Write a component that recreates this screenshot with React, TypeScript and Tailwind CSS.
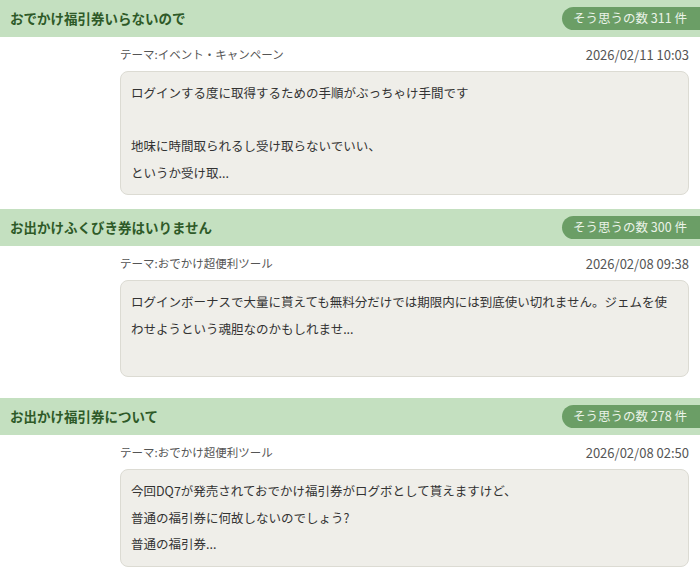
import React from 'react';

interface Post {
  title: string;
  count: number;
  theme: string;
  date: string;
  lines: string[];
  gap: string;
}

const posts: Post[] = [
  {
    title: 'おでかけ福引券いらないので',
    count: 311,
    theme: 'イベント・キャンペーン',
    date: '2026/02/11 10:03',
    lines: [
      'ログインする度に取得するための手順がぶっちゃけ手間です',
      '',
      '地味に時間取られるし受け取らないでいい、',
      'というか受け取...',
    ],
    gap: 'mb-[14px]',
  },
  {
    title: 'お出かけふくびき券はいりません',
    count: 300,
    theme: 'おでかけ超便利ツール',
    date: '2026/02/08 09:38',
    lines: [
      'ログインボーナスで大量に貰えても無料分だけでは期限内には到底使い切れません。ジェムを使',
      'わせようという魂胆なのかもしれませ...',
    ],
    gap: 'mb-[21px]',
  },
  {
    title: 'お出かけ福引券について',
    count: 278,
    theme: 'おでかけ超便利ツール',
    date: '2026/02/08 02:50',
    lines: [
      '今回DQ7が発売されておでかけ福引券がログボとして貰えますけど、',
      '普通の福引券に何故しないのでしょう?',
      '普通の福引券...',
    ],
    gap: 'mb-[16px]',
  },
];

const PostItem: React.FC<{ post: Post }> = ({ post }) => (
  <div className={post.gap}>
    {/* title bar */}
    <div className="h-[37px] bg-[#c4e0c0] flex items-center justify-between pl-[10px]">
      <h2 className="text-[13.5px] font-bold text-[#2e5a28] whitespace-nowrap">{post.title}</h2>
      <div className="h-[23px] w-[138px] bg-[#6b9e66] rounded-l-full flex items-center justify-center pr-[2px] text-[12.5px] text-[#eaf3e8] whitespace-nowrap">
        そう思うの数 {post.count} 件
      </div>
    </div>

    <div className="ml-[120px] mr-[11px]">
      <div className="h-[34px] flex items-center justify-between pt-[2px] text-[13px] text-[#555]">
        <span className="text-[11.5px]">テーマ:{post.theme}</span>
        <span>{post.date}</span>
      </div>
      <div className="min-h-[97px] bg-[#efeee9] border border-[#dcdbd3] rounded-lg px-[10px] py-[8px] text-[12.5px] leading-[26.5px] text-[#333]">
        {post.lines.map((line, i) => (
          <div key={i} className="whitespace-nowrap h-[26.5px]">{line}</div>
        ))}
      </div>
    </div>
  </div>
);

export default function App() {
  return (
    <div className="w-[700px] h-[584px] bg-white overflow-hidden font-['Noto_Sans_CJK_JP',sans-serif]">
      {posts.map((p) => (
        <PostItem key={p.date} post={p} />
      ))}
    </div>
  );
}
